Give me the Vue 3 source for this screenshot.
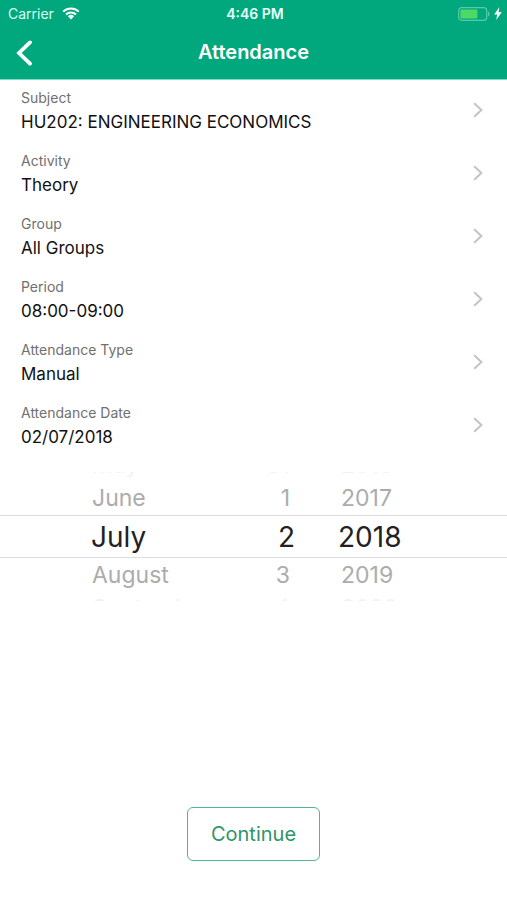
<script setup>
import { ref } from 'vue'

const fields = [
  { label: 'Subject', value: 'HU202: ENGINEERING ECONOMICS' },
  { label: 'Activity', value: 'Theory' },
  { label: 'Group', value: 'All Groups' },
  { label: 'Period', value: '08:00-09:00' },
  { label: 'Attendance Type', value: 'Manual' },
  { label: 'Attendance Date', value: '02/07/2018' },
]

const wheels = ref([
  { name: 'month', items: ['May', 'June', 'July', 'August', 'September'] },
  { name: 'day', items: ['31', '1', '2', '3', '4'] },
  { name: 'year', items: ['2016', '2017', '2018', '2019', '2020'] },
])
const steps = ['edge top', 'near above', 'current', 'near below', 'edge bottom']
</script>

<template>
  <div class="screen">
    <header class="header">
      <div class="status">
        <div class="carrier">
          <span>Carrier</span>
          <svg class="wifi" viewBox="0 0 18 13" aria-hidden="true">
            <path d="M1.2 4.6a11.2 11.2 0 0 1 15.6 0" />
            <path d="M4 7.5a7.2 7.2 0 0 1 10 0" />
            <path class="solid" d="M9 12.4 5.9 9.3a4.5 4.5 0 0 1 6.2 0z" />
          </svg>
        </div>
        <span class="clock">4:46 PM</span>
        <div class="power">
          <svg class="battery" viewBox="0 0 32 14" aria-hidden="true">
            <rect class="shell" x="0.7" y="0.7" width="28" height="12.6" rx="3" />
            <rect class="charge" x="2.4" y="2.4" width="17" height="9.2" rx="1" />
            <path class="tip" d="M30 4.5c2 .8 2 4.2 0 5z" />
          </svg>
          <svg class="bolt" viewBox="0 0 8 13" aria-hidden="true">
            <path d="M5.4 0 0.2 7.4h3L2.2 13l5.6-7.8H4.6z" />
          </svg>
        </div>
      </div>
      <div class="nav">
        <button class="back" type="button" aria-label="Back">
          <svg viewBox="0 0 16 26" aria-hidden="true"><path d="M14 2.4 3 13 14 23.6" /></svg>
        </button>
        <h1 class="title">Attendance</h1>
      </div>
    </header>

    <main class="main">
      <button v-for="f in fields" :key="f.label" class="field" type="button">
        <span class="texts">
          <span class="label">{{ f.label }}</span>
          <span class="value">{{ f.value }}</span>
        </span>
        <svg class="chevron" viewBox="0 0 10 16" aria-hidden="true"><path d="M1.2 1.2 8.4 8l-7.2 6.8" /></svg>
      </button>

      <div class="picker">
        <div v-for="w in wheels" :key="w.name" class="wheel" :class="w.name">
          <div v-for="(item, i) in w.items" :key="item" class="item" :class="steps[i]">{{ item }}</div>
        </div>
      </div>
    </main>

    <footer class="footer">
      <button class="continue" type="button">Continue</button>
    </footer>
  </div>
</template>

<style>
body {
  margin: 0;
  background: #fff;
}
</style>

<style scoped>
.screen {
  display: flex;
  flex-direction: column;
  min-height: 100vh;
  background: #fff;
  color: #111;
  font-family: Inter, "Liberation Sans", sans-serif;
}
button {
  font-family: inherit;
  cursor: pointer;
}
svg {
  display: block;
  fill: none;
}
.header {
  background: #02a87d;
  color: #fff;
  border-bottom: 1px solid #7fdcc2;
}
.status {
  display: grid;
  grid-template-columns: 1fr auto 1fr;
  align-items: center;
  height: 27px;
  padding: 0 5px 0 8px;
  font-size: 14px;
}
.carrier,
.power {
  display: flex;
  align-items: center;
  gap: 8px;
}
.carrier {
  color: #d9fff3;
}
.power {
  justify-content: flex-end;
  gap: 4px;
}
.clock {
  font-weight: 600;
  color: #e8fff8;
}
.wifi {
  width: 18px;
  height: 13px;
  stroke: #fff;
  stroke-width: 2;
}
.wifi .solid {
  fill: #fff;
  stroke: none;
}
.battery {
  width: 32px;
  height: 14px;
}
.shell {
  stroke: #5cc9aa;
  stroke-width: 1.2;
}
.charge {
  fill: #4cd964;
}
.tip {
  fill: #5cc9aa;
}
.bolt {
  width: 8px;
  height: 13px;
  fill: #fff;
}
.nav {
  display: grid;
  grid-template-columns: 1fr auto 1fr;
  align-items: center;
  height: 52px;
}
.back {
  justify-self: start;
  padding: 8px 16px;
  border: 0;
  background: none;
}
.back svg {
  width: 16px;
  height: 26px;
  stroke: #fff;
  stroke-width: 3.8;
  stroke-linecap: round;
}
.title {
  margin: 0;
  padding-bottom: 2px;
  font-size: 20px;
  line-height: 24px;
  font-weight: 600;
}
.main {
  flex: 1;
}
.field {
  display: flex;
  align-items: center;
  justify-content: space-between;
  width: 100%;
  height: 63px;
  padding: 0 24px 3px 21px;
  border: 0;
  background: none;
  text-align: left;
}
.texts {
  display: flex;
  flex-direction: column;
  gap: 4px;
}
.label {
  font-size: 14px;
  line-height: 20px;
  color: #707070;
}
.value {
  font-size: 17px;
  line-height: 20px;
  color: #111;
}
.chevron {
  width: 10px;
  height: 16px;
  stroke: #c4c4c6;
  stroke-width: 2;
}
.picker {
  display: grid;
  grid-template-columns: 242px 53px 1fr;
  padding-top: 14px;
}
.wheel {
  display: flex;
  flex-direction: column;
}
.item {
  box-sizing: border-box;
  display: flex;
  align-items: center;
  height: 38px;
  font-size: 23px;
  line-height: 28px;
  color: #acacac;
}
.item.above {
  padding-top: 4px;
}
.item.below {
  padding-bottom: 4px;
}
.item.current {
  height: 43px;
  border-top: 1px solid #dcdcdc;
  border-bottom: 1px solid #dcdcdc;
  font-size: 28px;
  color: #222;
}
.item.edge {
  height: 5px;
  overflow: hidden;
  line-height: 24px;
  color: #f2f2f2;
}
.item.top {
  align-items: flex-end;
}
.item.bottom {
  align-items: flex-start;
}
.month .item {
  padding-left: 92px;
}
.month .item.current {
  padding-left: 91px;
}
.day .item {
  justify-content: flex-end;
  padding-right: 5px;
}
.day .item.current {
  padding-right: 0;
}
.year .item {
  padding-left: 46px;
}
.year .item.current {
  padding-left: 43px;
}
.footer {
  display: flex;
  justify-content: center;
  padding: 0 20px 39px;
}
.continue {
  padding: 14px 23px;
  border: 1px solid #4fb592;
  border-radius: 6px;
  background: #fff;
  color: #2f9468;
  font-size: 20px;
  line-height: 24px;
}
</style>
